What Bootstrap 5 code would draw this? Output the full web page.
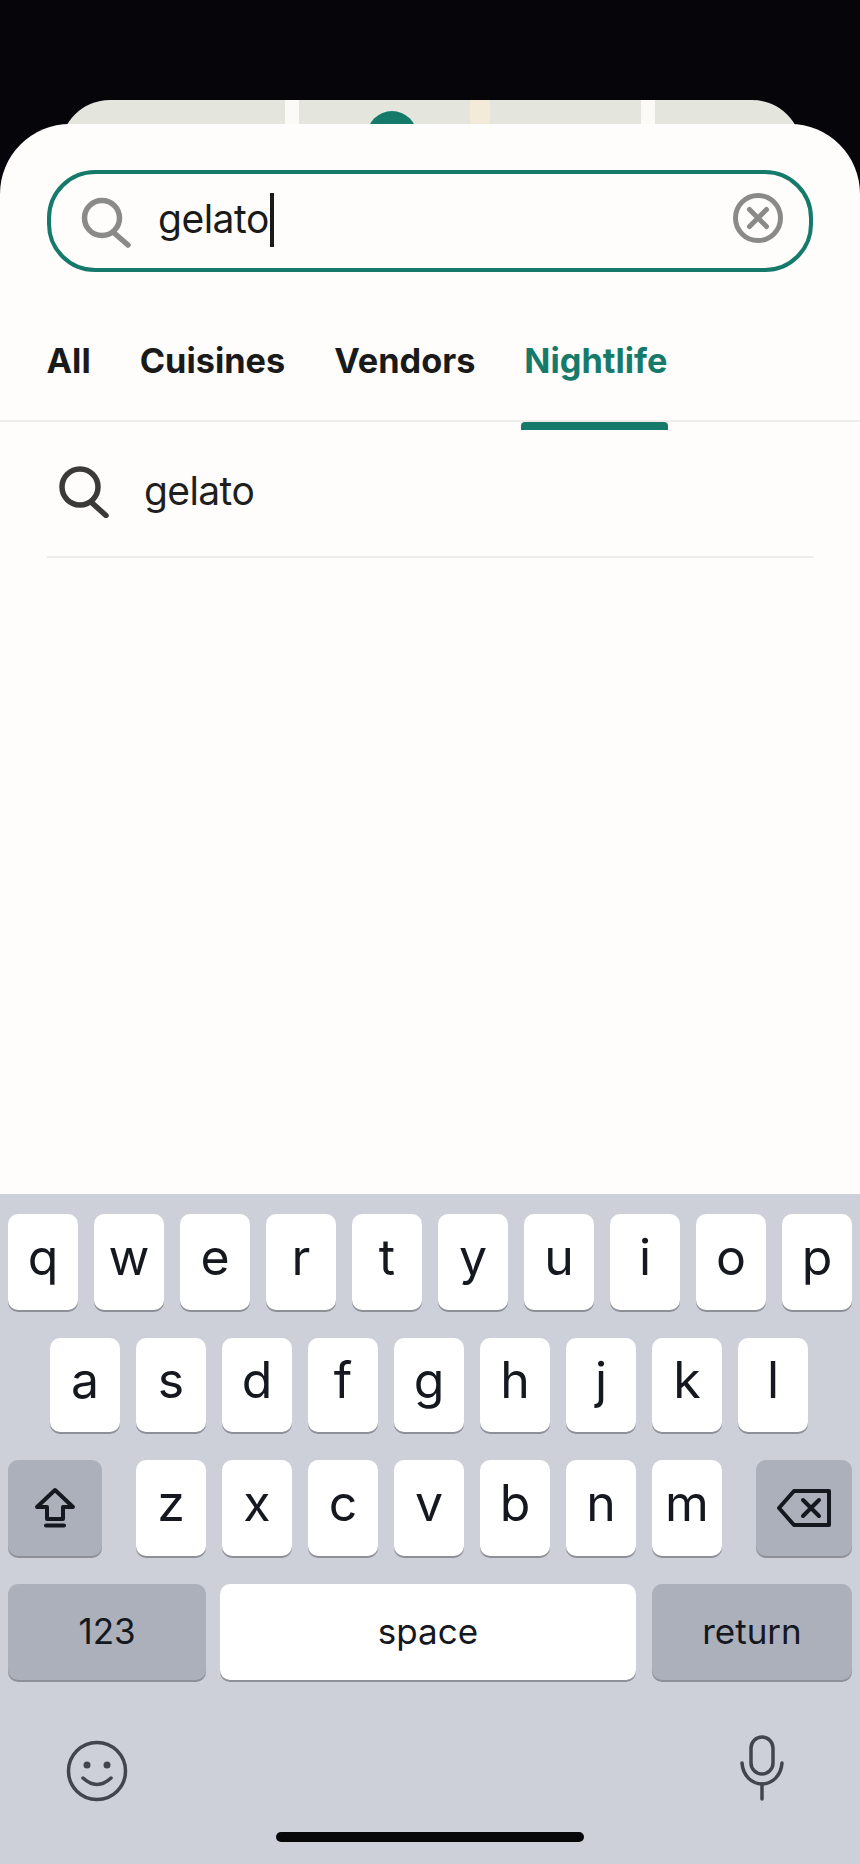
<!DOCTYPE html>
<html lang="en">
<head>
    <meta charset="UTF-8">
    <title>Search</title>
    <link href="https://cdn.jsdelivr.net/npm/bootstrap@5.3.0/dist/css/bootstrap.min.css" rel="stylesheet">
    <style>
        html, body { height: 100%; }
        body {
            background-color: #05050a;
            font-family: Inter, "Liberation Sans", sans-serif;
            color: #1a1a1a;
        }
        .phone { height: 1864px; width: 860px; overflow: hidden; }

        /* map card peeking behind the sheet */
        .map-peek {
            position: relative;
            flex-shrink: 0;
            height: 80px;
            margin: 100px 58px -56px 60px;
            border-radius: 50px 50px 0 0;
            overflow: hidden;
        }
        .road-a { width: 14px; background-color: #fbfaf7; }
        .road-b { width: 20px; background-color: #f3ebd7; }
        .land { background-color: #e4e5dc; }
        .map-pin {
            position: absolute;
            left: 307px;
            top: 11px;
            width: 50px;
            height: 50px;
            border-radius: 50%;
            background-color: #167a6b;
        }

        .sheet {
            height: 1070px;
            flex-shrink: 0;
            background-color: #fefdfb;
            border-radius: 70px 70px 0 0;
            padding-top: 46px;
        }
        .search-box {
            height: 102px;
            margin: 0 47px;
            border: 4px solid #167a6b;
            border-radius: 48px;
            padding: 0 26px 0 29px;
        }
        .search-text { font-size: 39px; letter-spacing: -0.5px; margin-left: 26px; line-height: 1; padding-top: 3px; }
        .caret-bar { display: inline-block; width: 4px; height: 54px; background-color: #1a1a1a; margin-left: 1px; vertical-align: middle; margin-top: -5px; }
        .clear-icon { margin-bottom: 6px; }

        .tab-bar { margin-top: 51px; padding: 0 46.5px; gap: 49px; height: 99px; border-bottom: 2px solid #eeedeb; }
        .tab-bar .nav-link { position: relative; padding: 0; height: 99px; font-size: 34.3px; font-weight: 700; line-height: 76px; color: #1a1a1a; }
        .tab-bar .nav-link.active { color: #167a6b; }
        .tab-bar .nav-link.active::after {
            content: "";
            position: absolute;
            left: -3px;
            right: -1px;
            top: 99px;
            height: 8px;
            background-color: #167a6b;
            border-radius: 4px 4px 0 0;
        }

        .result-row { margin: 7px 46px 0 47px; height: 129px; border-bottom: 2px solid #eeedeb; padding-left: 12px; padding-bottom: 2px; }
        .result-text { font-size: 39px; letter-spacing: -0.6px; margin-left: 35px; color: #1f1f1f; }

        /* keyboard */
        .kbd {
            height: 670px;
            flex-shrink: 0;
            background-color: #cdd0d9;
            padding: 20px 8px 0;
        }
        .kbd-row { display: flex; justify-content: center; gap: 16px; margin-bottom: 28px; height: 96px; }
        .kbd-row.short-row { height: 94px; padding-right: 2px; }
        .kbd-key {
            width: 70px;
            background-color: #fff;
            border-radius: 10px;
            box-shadow: 0 2px 0 #8e9098;
            font-size: 50px;
            font-weight: 400;
            color: #15181f;
            padding-bottom: 10px;
        }
        .kbd-key.fn { background-color: #abb0ba; }
        .kbd-key.wordy { font-size: 35px; padding-bottom: 2px; }
        .shift-key { width: 94px; margin-right: 18px; padding-bottom: 0; }
        .del-key { width: 96px; margin-left: 18px; padding-bottom: 0; }
        .num-key { width: 198px; margin-right: -2px; }
        .space-key { width: 416px; }
        .ret-key { width: 200px; }
        .kbd-bottom { padding: 27px 68px 0 58px; height: 124px; }
        .emoji-icon { margin-top: 5px; }
        .home-bar { width: 308px; height: 10px; border-radius: 5px; background-color: #070709; margin: 0 auto; }
        svg { display: block; flex-shrink: 0; }
    </style>
</head>
<body>
<div class="phone d-flex flex-column">

    <div class="map-peek d-flex">
        <div class="land" style="width:225px"></div>
        <div class="road-a"></div>
        <div class="land" style="width:171px"></div>
        <div class="road-b"></div>
        <div class="land" style="width:151px"></div>
        <div class="road-a"></div>
        <div class="land flex-grow-1"></div>
        <div class="map-pin"></div>
    </div>

    <div class="sheet position-relative">
        <div class="search-box d-flex align-items-center">
            <svg width="52" height="54" viewBox="0 0 52 54" fill="none" stroke="#8a8a88" stroke-width="5.5" stroke-linecap="round">
                <circle cx="22" cy="24" r="17.5"/>
                <path d="M33 38 L48 51"/>
            </svg>
            <div class="search-text flex-grow-1">gelato<span class="caret-bar"></span></div>
            <svg class="clear-icon" width="50" height="52" viewBox="0 0 50 52" fill="none" stroke="#8a8a88" stroke-width="5" stroke-linecap="round">
                <circle cx="25" cy="26" r="22.5"/>
                <path d="M16.5 17.5 L33.5 34.5 M33.5 17.5 L16.5 34.5"/>
            </svg>
        </div>

        <ul class="nav tab-bar flex-nowrap">
            <li class="nav-item"><a class="nav-link" href="#">All</a></li>
            <li class="nav-item"><a class="nav-link" href="#">Cuisines</a></li>
            <li class="nav-item"><a class="nav-link" href="#">Vendors</a></li>
            <li class="nav-item"><a class="nav-link active" href="#">Nightlife</a></li>
        </ul>

        <div class="result-row d-flex align-items-center">
            <svg width="50" height="52" viewBox="0 0 50 52" fill="none" stroke="#3a3a38" stroke-width="5.5" stroke-linecap="round">
                <circle cx="21" cy="21" r="18"/>
                <path d="M32 36 L47 49.5"/>
            </svg>
            <div class="result-text">gelato</div>
        </div>
    </div>

    <div class="kbd">
        <div class="kbd-row">
            <div class="kbd-key d-flex align-items-center justify-content-center">q</div>
            <div class="kbd-key d-flex align-items-center justify-content-center">w</div>
            <div class="kbd-key d-flex align-items-center justify-content-center">e</div>
            <div class="kbd-key d-flex align-items-center justify-content-center">r</div>
            <div class="kbd-key d-flex align-items-center justify-content-center">t</div>
            <div class="kbd-key d-flex align-items-center justify-content-center">y</div>
            <div class="kbd-key d-flex align-items-center justify-content-center">u</div>
            <div class="kbd-key d-flex align-items-center justify-content-center">i</div>
            <div class="kbd-key d-flex align-items-center justify-content-center">o</div>
            <div class="kbd-key d-flex align-items-center justify-content-center">p</div>
        </div>
        <div class="kbd-row short-row">
            <div class="kbd-key d-flex align-items-center justify-content-center">a</div>
            <div class="kbd-key d-flex align-items-center justify-content-center">s</div>
            <div class="kbd-key d-flex align-items-center justify-content-center">d</div>
            <div class="kbd-key d-flex align-items-center justify-content-center">f</div>
            <div class="kbd-key d-flex align-items-center justify-content-center">g</div>
            <div class="kbd-key d-flex align-items-center justify-content-center">h</div>
            <div class="kbd-key d-flex align-items-center justify-content-center">j</div>
            <div class="kbd-key d-flex align-items-center justify-content-center">k</div>
            <div class="kbd-key d-flex align-items-center justify-content-center">l</div>
        </div>
        <div class="kbd-row">
            <div class="kbd-key fn shift-key d-flex align-items-center justify-content-center">
                <svg width="42" height="42" viewBox="0 0 42 42" fill="none" stroke="#15181f" stroke-width="4" stroke-linejoin="round">
                    <path d="M21 3 L39 20 H29 V32 H13 V20 H3 Z"/>
                    <path d="M12 38.5 H30" stroke-linecap="round"/>
                </svg>
            </div>
            <div class="kbd-key d-flex align-items-center justify-content-center">z</div>
            <div class="kbd-key d-flex align-items-center justify-content-center">x</div>
            <div class="kbd-key d-flex align-items-center justify-content-center">c</div>
            <div class="kbd-key d-flex align-items-center justify-content-center">v</div>
            <div class="kbd-key d-flex align-items-center justify-content-center">b</div>
            <div class="kbd-key d-flex align-items-center justify-content-center">n</div>
            <div class="kbd-key d-flex align-items-center justify-content-center">m</div>
            <div class="kbd-key fn del-key d-flex align-items-center justify-content-center">
                <svg width="56" height="38" viewBox="0 0 56 38" fill="none" stroke="#15181f" stroke-width="4" stroke-linejoin="round" stroke-linecap="round">
                    <path d="M18 2 H53 V36 H18 L3 19 Z"/>
                    <path d="M27 11 L43 27 M43 11 L27 27"/>
                </svg>
            </div>
        </div>
        <div class="kbd-row">
            <div class="kbd-key fn wordy num-key d-flex align-items-center justify-content-center">123</div>
            <div class="kbd-key wordy space-key d-flex align-items-center justify-content-center">space</div>
            <div class="kbd-key fn wordy ret-key d-flex align-items-center justify-content-center">return</div>
        </div>
        <div class="kbd-bottom d-flex justify-content-between align-items-start">
            <svg class="emoji-icon" width="62" height="62" viewBox="0 0 62 62" fill="none" stroke="#42454e" stroke-width="3.5" stroke-linecap="round">
                <circle cx="31" cy="31" r="28.5"/>
                <circle cx="21" cy="25" r="3.5" fill="#42454e" stroke="none"/>
                <circle cx="41" cy="25" r="3.5" fill="#42454e" stroke="none"/>
                <path d="M17 38 Q31 51 45 38"/>
            </svg>
            <svg width="44" height="66" viewBox="0 0 44 66" fill="none" stroke="#42454e" stroke-width="3.5" stroke-linecap="round">
                <rect x="11" y="2" width="22" height="37" rx="11"/>
                <path d="M2 28 C3 41 12 49 22 49 C32 49 41 41 42 28"/>
                <path d="M22 49 V64"/>
            </svg>
        </div>
        <div class="home-bar"></div>
    </div>
</div>
<script src="https://cdn.jsdelivr.net/npm/bootstrap@5.3.0/dist/js/bootstrap.bundle.min.js"></script>
</body>
</html>
